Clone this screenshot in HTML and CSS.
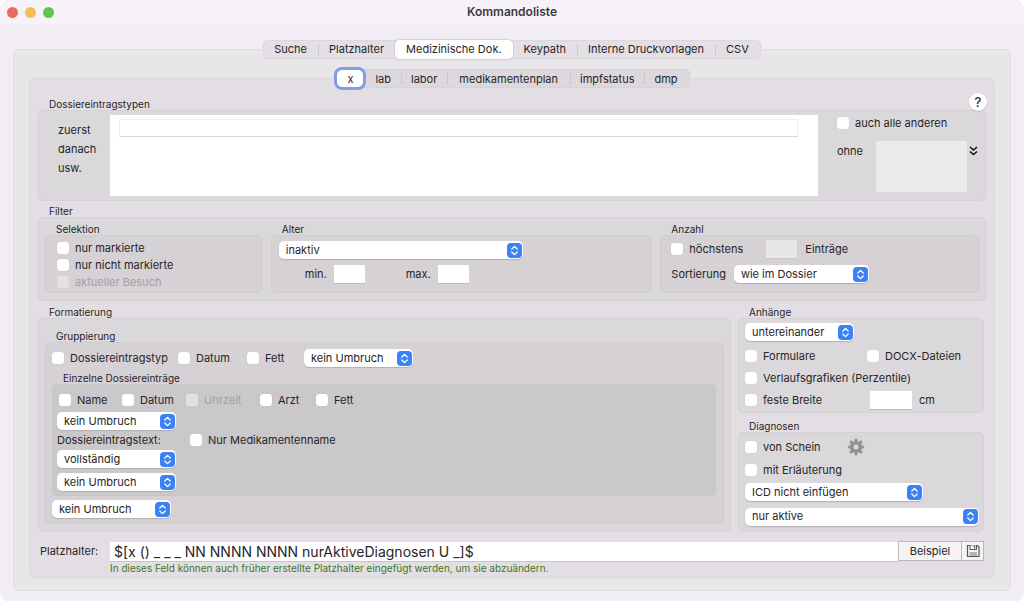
FILE: index.html
```html
<!DOCTYPE html>
<html lang="de">
<head>
<meta charset="utf-8">
<title>Kommandoliste</title>
<link rel="stylesheet" href="styles.css">
</head>
<body>
<svg class="symbols" aria-hidden="true">
  <symbol id="updown" viewBox="0 0 15 15">
    <rect width="15" height="15" rx="4" fill="#3b82f7"/>
    <path d="M4.8 6 7.5 3.4 10.2 6M4.8 9 7.5 11.6 10.2 9" fill="none" stroke="#fff" stroke-width="1.3" stroke-linecap="round" stroke-linejoin="round"/>
  </symbol>
</svg>
<div class="window">
  <header class="titlebar">
    <div class="lights"><span class="light close"></span><span class="light minimize"></span><span class="light zoom"></span></div>
    <h1>Kommandoliste</h1>
  </header>
  <main class="content">
    <nav class="tabs" aria-label="Bereich">
      <button class="tab">Suche</button>
      <button class="tab divided">Platzhalter</button>
      <button class="tab selected">Medizinische Dok.</button>
      <button class="tab">Keypath</button>
      <button class="tab divided">Interne Druckvorlagen</button>
      <button class="tab divided last">CSV</button>
    </nav>
    <div class="panel outer">
      <nav class="tabs sub" aria-label="Befehl">
        <button class="tab selected focused">x</button>
        <button class="tab">lab</button>
        <button class="tab divided">labor</button>
        <button class="tab divided">medikamentenplan</button>
        <button class="tab divided">impfstatus</button>
        <button class="tab divided last">dmp</button>
      </nav>
      <div class="panel inner">
        <button class="help" aria-label="Hilfe">?</button>

        <section class="group">
          <h2>Dossiereintragstypen</h2>
          <div class="box types">
            <div class="order"><span>zuerst</span><span>danach</span><span>usw.</span></div>
            <div class="list"><input type="text" class="token" aria-label="Eintragstypen"></div>
            <div class="others">
              <label class="check"><input type="checkbox">auch alle anderen</label>
              <div class="without">
                <label for="ohne">ohne</label>
                <textarea id="ohne" disabled></textarea>
                <button class="expand" aria-label="Auswahl öffnen"><svg viewBox="0 0 9 10"><path d="M1 1l3.500 3L8 1M1 5.500l3.500 3L8 5.500" fill="none" stroke="#111" stroke-width="1.600"/></svg></button>
              </div>
            </div>
          </div>
        </section>

        <section class="group">
          <h2>Filter</h2>
          <div class="box filter">
            <section class="group">
              <h3>Selektion</h3>
              <div class="box deep selection">
                <label class="check"><input type="checkbox">nur markierte</label>
                <label class="check"><input type="checkbox">nur nicht markierte</label>
                <label class="check disabled"><input type="checkbox" disabled>aktueller Besuch</label>
              </div>
            </section>
            <section class="group">
              <h3>Alter</h3>
              <div class="box deep age">
                <span class="popup wide"><select aria-label="Alter"><option>inaktiv</option></select><svg><use href="#updown"/></svg></span>
                <div class="range">
                  <label for="min">min.</label><input type="text" id="min" class="field short">
                  <label for="max">max.</label><input type="text" id="max" class="field short">
                </div>
              </div>
            </section>
            <section class="group">
              <h3>Anzahl</h3>
              <div class="box deep count">
                <div class="line limit">
                  <label class="check"><input type="checkbox">höchstens</label>
                  <input type="text" id="anzahl" class="field short" disabled>
                  <label for="anzahl">Einträge</label>
                </div>
                <div class="line">
                  <label for="sort">Sortierung</label>
                  <span class="popup sort"><select id="sort"><option>wie im Dossier</option></select><svg><use href="#updown"/></svg></span>
                </div>
              </div>
            </section>
          </div>
        </section>

        <div class="columns">
          <section class="group">
            <h2>Formatierung</h2>
            <div class="box format">
              <section class="group">
                <h3>Gruppierung</h3>
                <div class="box deep grouping">
                  <div class="by">
                    <label class="check"><input type="checkbox">Dossiereintragstyp</label>
                    <label class="check"><input type="checkbox">Datum</label>
                    <label class="check"><input type="checkbox">Fett</label>
                    <span class="popup narrow"><select aria-label="Umbruch nach Gruppe"><option>kein Umbruch</option></select><svg><use href="#updown"/></svg></span>
                  </div>
                  <section class="group">
                    <h3>Einzelne Dossiereinträge</h3>
                    <div class="box deepest entries">
                      <div class="parts">
                        <label class="check"><input type="checkbox">Name</label>
                        <label class="check"><input type="checkbox">Datum</label>
                        <label class="check disabled"><input type="checkbox" disabled>Uhrzeit</label>
                        <label class="check"><input type="checkbox">Arzt</label>
                        <label class="check"><input type="checkbox">Fett</label>
                      </div>
                      <span class="popup"><select aria-label="Umbruch nach Kopf"><option>kein Umbruch</option></select><svg><use href="#updown"/></svg></span>
                      <div class="text-row">
                        <label for="text">Dossiereintragstext:</label>
                        <label class="check"><input type="checkbox">Nur Medikamentenname</label>
                      </div>
                      <span class="popup"><select id="text"><option>vollständig</option></select><svg><use href="#updown"/></svg></span>
                      <span class="popup spaced"><select aria-label="Umbruch nach Text"><option>kein Umbruch</option></select><svg><use href="#updown"/></svg></span>
                    </div>
                  </section>
                  <span class="popup after"><select aria-label="Umbruch nach Eintrag"><option>kein Umbruch</option></select><svg><use href="#updown"/></svg></span>
                </div>
              </section>
            </div>
          </section>

          <div class="side">
            <section class="group">
              <h2>Anhänge</h2>
              <div class="box attachments">
                <span class="popup narrow"><select aria-label="Anordnung"><option>untereinander</option></select><svg><use href="#updown"/></svg></span>
                <div class="pair">
                  <label class="check"><input type="checkbox">Formulare</label>
                  <label class="check"><input type="checkbox">DOCX-Dateien</label>
                </div>
                <label class="check"><input type="checkbox">Verlaufsgrafiken (Perzentile)</label>
                <div class="pair">
                  <label class="check"><input type="checkbox">feste Breite</label>
                  <span class="measure"><input type="text" id="breite" class="field"><label for="breite">cm</label></span>
                </div>
              </div>
            </section>
            <section class="group">
              <h2>Diagnosen</h2>
              <div class="box diagnoses">
                <div class="line certificate">
                  <label class="check"><input type="checkbox">von Schein</label>
                  <button class="gear" aria-label="Einstellungen"><svg viewBox="-9 -9 18 18">
                    <g fill="#929194"><path id="tooth" d="M-1.800-5-1.200-8.200H1.200L1.800-5z"/>
                    <use href="#tooth" transform="rotate(45)"/><use href="#tooth" transform="rotate(90)"/><use href="#tooth" transform="rotate(135)"/><use href="#tooth" transform="rotate(180)"/><use href="#tooth" transform="rotate(225)"/><use href="#tooth" transform="rotate(270)"/><use href="#tooth" transform="rotate(315)"/></g>
                    <circle r="4.200" fill="none" stroke="#929194" stroke-width="3.400"/></svg></button>
                </div>
                <label class="check"><input type="checkbox">mit Erläuterung</label>
                <span class="popup icd"><select aria-label="ICD"><option>ICD nicht einfügen</option></select><svg><use href="#updown"/></svg></span>
                <span class="popup full"><select aria-label="Status"><option>nur aktive</option></select><svg><use href="#updown"/></svg></span>
              </div>
            </section>
          </div>
        </div>

        <div class="result">
          <label for="platzhalter">Platzhalter:</label>
          <input type="text" id="platzhalter" value="$[x () _ _ _ NN NNNN NNNN nurAktiveDiagnosen U _]$">
          <button class="square example">Beispiel</button>
          <button class="square save" aria-label="Sichern"><svg viewBox="0 0 14 14"><path d="M1.500 1.500h10l1.500 1.500v9.500H1.500z" fill="#f4f4f4" stroke="#555" stroke-width="1.200"/><path d="M4 1.500v4h6.500v-4" fill="#fff" stroke="#555"/><path d="M8.500 2v2.500" stroke="#555" stroke-width="1.400"/><path d="M3.500 9h7.500M3.500 11h7.500" stroke="#777" stroke-width="1.200"/></svg></button>
        </div>
        <p class="hint">In dieses Feld können auch früher erstellte Platzhalter eingefügt werden, um sie abzuändern.</p>
      </div>
    </div>
  </main>
</div>
</body>
</html>
```
FILE: styles.css
```css
* { box-sizing: border-box; }

body {
  margin: 0;
  background: #fff;
  color: #262527;
  font: 11px/14px Inter, "Liberation Sans", sans-serif;
}

h1, h2, h3, p { margin: 0; font-weight: 400; }

button, input, select, textarea {
  margin: 0;
  padding: 0;
  border: 0;
  color: inherit;
  font: inherit;
}

.symbols { position: absolute; width: 0; height: 0; }

.window {
  min-height: 100vh;
  border-radius: 10px;
  background: #f2edf4;
  overflow: hidden;
}

/* Title bar */
.titlebar {
  display: grid;
  grid-template-columns: 1fr auto 1fr;
  align-items: center;
  height: 25px;
  padding: 0 7px;
  background: #f6f2f8;
}
.titlebar h1 { padding-bottom: 2px; font-size: 12px; font-weight: 600; color: #3d3b3e; }
.lights { display: flex; gap: 7px; }
.light { width: 11px; height: 11px; border-radius: 50%; }
.close { background: #ed6a5f; }
.minimize { background: #f5bf4f; }
.zoom { background: #61c554; }

.content { padding: 15px 13px 11px; }

/* Segmented tabs */
.tabs {
  position: relative;
  z-index: 1;
  display: flex;
  width: fit-content;
  height: 19px;
  margin: 0 auto -10px;
  border-radius: 5px;
  background: #e3dfe4;
  box-shadow: inset 0 0 0 1px #dbd8dc;
}
.tabs.sub { background: #dcd8dd; box-shadow: inset 0 0 0 1px #d6d3d8; }
.tab {
  position: relative;
  padding: 0 11px 1px;
  background: none;
  border-radius: 5px;
}
.sub .tab { padding: 0 10px; }
.tab.last, .sub .tab.last { padding-right: 12px; }
.tab.divided::before {
  content: "";
  position: absolute;
  left: 0;
  top: 4px;
  bottom: 4px;
  width: 1px;
  background: #cbc8cc;
}
.tab.selected { background: #fff; box-shadow: 0 0 1px 1px #d2cfd3; }
.sub .tab.focused { margin: 1px 2px 1px 3px; padding: 0 10px; box-shadow: 0 0 0 3px #7f9ee6; }
.sub .tab:nth-child(4) { padding: 0 12px; }

/* Panels */
.panel {
  position: relative;
  border: 1px solid #e2dfe3;
  border-radius: 5px;
}
.outer { padding: 19px 15px 12px; background: #e8e6e9; }
.inner { padding: 19px 8px 2px; background: #e3dee4; border-color: #dcd8dd; }

.group h2, .group h3 {
  padding-left: 11px;
  font-size: 10px;
  line-height: 12px;
}
.box {
  border: 1px solid #d5d2d6;
  border-radius: 5px;
  background: #dad8db;
}
.box.deep { background: #d5d1d5; border-color: #d0cdd1; }
.box.deepest { background: #cac8cb; border-color: #c7c5c8; }

.help {
  position: absolute;
  top: 14px;
  right: 7px;
  width: 18px;
  height: 18px;
  border-radius: 50%;
  background: #fff;
  box-shadow: 0 1px 1px #bbb8bc;
  font-size: 13px;
  font-weight: 500;
  line-height: 18px;
}

/* Controls */
.check {
  display: flex;
  align-items: center;
  gap: 6px;
  white-space: nowrap;
}
.check input {
  appearance: none;
  flex: none;
  width: 12px;
  height: 12px;
  border-radius: 3px;
  background: #fff;
  box-shadow: 0 0 1px #b5b2b6;
}
.check.disabled { color: #a3a0a4; }
.check input:disabled { background: #e3e1e4; box-shadow: none; }

.field {
  width: 42px;
  height: 18px;
  background: #fff;
  box-shadow: 0 1px 0 #bcb9bd;
}
.field.short { width: 31px; }
.field:disabled { background: #e8e6e9; box-shadow: 0 1px 0 #cac7cb; }

.popup {
  display: grid;
  width: 119px;
  height: 18px;
  border-radius: 5px;
  background: #fff;
  box-shadow: 0 1px 1px #b2afb3;
}
.popup select {
  grid-area: 1 / 1;
  appearance: none;
  width: 100%;
  padding: 0 22px 1px 7px;
  background: none;
}
.popup svg {
  grid-area: 1 / 1;
  place-self: center end;
  width: 15px;
  height: 15px;
  margin-right: 1px;
  pointer-events: none;
}
.popup.narrow { width: 109px; }
.popup.wide { width: 244px; }
.popup.sort { width: 135px; }
.popup.icd { width: 178px; }
.popup.full { width: 100%; }
.popup.spaced { margin-top: 5px; }
.popup.after { margin-top: 4px; }

.line { display: flex; align-items: center; }

/* Entry types */
.types { display: grid; grid-template-columns: 71px 1fr 167px; height: 91px; }
.order { display: grid; align-content: start; padding: 10px 0 0 19px; line-height: 19px; }
.list { margin: 4px 0; padding: 4px 20px 0 9px; background: #fff; }
.token {
  width: 100%;
  height: 18px;
  border: 1px solid #ededed;
  border-bottom-color: #d9d9d9;
}
.others { padding: 5px 0 0 19px; }
.without { display: flex; align-items: flex-start; margin-top: 11px; }
.without label { width: 39px; padding-top: 3px; }
.without textarea {
  width: 91px;
  height: 51px;
  background: #ebebed;
  resize: none;
}
.expand { width: 9px; height: 10px; margin: 5px 0 0 2px; background: none; }
.expand svg { display: block; }

/* Filter */
.types, .filter { margin-bottom: 4px; }
.filter {
  display: grid;
  grid-template-columns: 217fr 381fr 319fr;
  gap: 9px;
  padding: 5px 6px 7px;
}
.filter .box { height: 58px; }
.selection { display: grid; align-content: start; grid-auto-rows: 17px; padding: 3px 11px; }
.age { padding: 5px 7px; }
.range { display: flex; align-items: center; gap: 7px; margin-top: 6px; padding-left: 26px; }
.range .field + label { margin-left: 34px; }
.count { padding: 4px 10px; }
.count .line + .line { margin-top: 7px; }
.count .line { gap: 8px; }
.limit .check { width: 87px; }

/* Formatting */
.columns {
  display: grid;
  grid-template-columns: 1fr 246px;
  gap: 7px;
  margin: 5px 2px 0 0;
}
.format { height: 214px; padding: 11px 6px 7px; }
.grouping { padding: 6px 7px 5px 6px; }
.by {
  display: grid;
  grid-template-columns: 126px 69px 57px auto;
  justify-content: start;
  margin-bottom: 5px;
}
.entries { padding: 8px 4px 4px; }
.parts {
  display: grid;
  grid-template-columns: 63px 64px 74px 56px auto;
  justify-content: start;
  padding: 0 0 5px 2px;
}
.text-row { display: grid; grid-template-columns: 133px auto; margin: 3px 0; }

/* Attachments and diagnoses */
.side { display: grid; align-content: start; gap: 7px; }
.attachments { height: 95px; padding: 4px 4px 3px 6px; }
.attachments > .check { height: 22px; }
.pair { display: grid; grid-template-columns: 122px auto; align-items: center; height: 22px; }
.popup + .pair { margin-top: 4px; }
.measure { display: flex; align-items: center; gap: 7px; margin-left: 3px; }
.diagnoses { display: grid; height: 100px; padding: 5px 4px 5px 6px; align-content: space-between; }
.certificate { gap: 26px; }
.gear { width: 18px; height: 18px; background: none; }
.gear svg { display: block; }
.popup.full { width: 234px; }

/* Result */
.result { display: flex; align-items: center; margin: 9px 2px 0 2px; }
.result label { width: 70px; }
.result input {
  flex: 1;
  height: 19px;
  padding-left: 4px;
  background: #fff;
  box-shadow: 0 1px 0 #c9c6ca;
  font-size: 14px;
}
.square {
  height: 20px;
  border: 1px solid #b9b7ba;
  background: #f5f4f5;
}
.example { width: 64px; }
.save { display: grid; place-items: center; width: 22px; border-left: 0; }
.save svg { width: 14px; height: 14px; }
.hint {
  padding-left: 72px;
  color: #3c7729;
  font-size: 10px;
  line-height: 14px;
}
```
